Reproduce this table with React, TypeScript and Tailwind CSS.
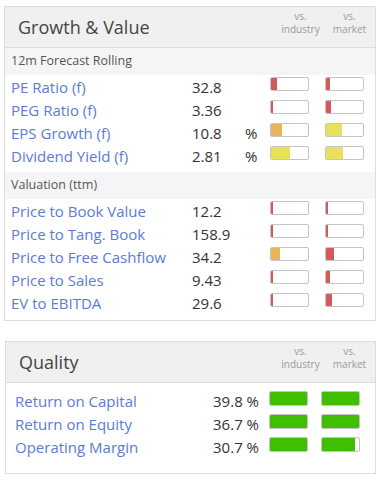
import React from 'react';

type Fill = { pct: number; color: string };

const RED = '#d45a5a';
const ORANGE = '#ebb35a';
const YELLOW = '#e9e15c';
const GREEN = '#3fbf00';

const Bar: React.FC<{ fill: Fill; tall?: boolean }> = ({ fill, tall }) => (
  <div
    className={`w-[39px] ${tall ? 'h-[15px]' : 'h-[14px]'} border border-[#c4c4c4] rounded-[2px] bg-white overflow-hidden`}
  >
    <div className="h-full" style={{ width: fill.pct, backgroundColor: fill.color }} />
  </div>
);

const PanelHeader: React.FC<{ title: string }> = ({ title }) => (
  <div className="flex items-center h-[41px] bg-[#f0f0f0] border-b border-[#dcdcdc]">
    <div className="flex-1 pl-[13px] text-[18px] text-[#444] leading-none">{title}</div>
    <div className="flex pr-px self-start pt-[3px] text-[10px] leading-[13px] text-[#9a9a9a]">
      <div className="w-[49px] text-center">
        vs.
        <br />
        industry
      </div>
      <div className="w-[49px] text-center">
        vs.
        <br />
        market
      </div>
    </div>
  </div>
);

const SubHeader: React.FC<{ text: string }> = ({ text }) => (
  <div className="h-[27px] bg-[#f5f5f5] pl-[6px] flex items-center text-[12.5px] text-[#555]">{text}</div>
);

type Row = { label: string; value: string; pct?: boolean; ind: Fill; mkt: Fill };

const forecast: Row[] = [
  { label: 'PE Ratio (f)', value: '32.8', ind: { pct: 6, color: RED }, mkt: { pct: 4, color: RED } },
  { label: 'PEG Ratio (f)', value: '3.36', ind: { pct: 2, color: RED }, mkt: { pct: 5, color: RED } },
  { label: 'EPS Growth (f)', value: '10.8', pct: true, ind: { pct: 11, color: ORANGE }, mkt: { pct: 16, color: YELLOW } },
  { label: 'Dividend Yield (f)', value: '2.81', pct: true, ind: { pct: 19, color: YELLOW }, mkt: { pct: 17, color: YELLOW } },
];

const valuation: Row[] = [
  { label: 'Price to Book Value', value: '12.2', ind: { pct: 2, color: RED }, mkt: { pct: 2, color: RED } },
  { label: 'Price to Tang. Book', value: '158.9', ind: { pct: 2, color: RED }, mkt: { pct: 2, color: RED } },
  { label: 'Price to Free Cashflow', value: '34.2', ind: { pct: 9, color: ORANGE }, mkt: { pct: 8, color: RED } },
  { label: 'Price to Sales', value: '9.43', ind: { pct: 2, color: RED }, mkt: { pct: 4, color: RED } },
  { label: 'EV to EBITDA', value: '29.6', ind: { pct: 2, color: RED }, mkt: { pct: 6, color: RED } },
];

const quality: Row[] = [
  { label: 'Return on Capital', value: '39.8 %', ind: { pct: 37, color: GREEN }, mkt: { pct: 37, color: GREEN } },
  { label: 'Return on Equity', value: '36.7 %', ind: { pct: 37, color: GREEN }, mkt: { pct: 37, color: GREEN } },
  { label: 'Operating Margin', value: '30.7 %', ind: { pct: 37, color: GREEN }, mkt: { pct: 33, color: GREEN } },
];

const GrowthRow: React.FC<{ row: Row }> = ({ row }) => (
  <div className="flex items-start h-[23px] pl-[6px] text-[15px] leading-[23px]">
    <div className="w-[181px] pt-px text-[#5b7bd4]">{row.label}</div>
    <div className="w-[53px] pt-px text-[#333]">{row.value}</div>
    <div className="w-[25px] pt-px text-[#333]">{row.pct ? '%' : ''}</div>
    <div className="flex gap-[16px] pt-[2px]">
      <Bar fill={row.ind} />
      <Bar fill={row.mkt} />
    </div>
  </div>
);

const QualityRow: React.FC<{ row: Row }> = ({ row }) => (
  <div className="flex items-start h-[23px] pl-[9px] text-[15px] leading-[23px]">
    <div className="w-[155px] pt-px text-[#5b7bd4]">{row.label}</div>
    <div className="w-[89px] pt-px text-right text-[#333]">{row.value}</div>
    <div className="flex gap-[13px] pt-[2px] ml-[10px]">
      <Bar fill={row.ind} tall />
      <Bar fill={row.mkt} tall />
    </div>
  </div>
);

export default function App() {
  return (
    <div className="bg-white min-h-screen pt-[6px] pl-[4px]" style={{ fontFamily: '"Open Sans", sans-serif' }}>
      <div className="w-[372px] border border-[#dcdcdc] pb-[6px]">
        <PanelHeader title="Growth & Value" />
        <SubHeader text="12m Forecast Rolling" />
        {forecast.map((r) => (
          <GrowthRow key={r.label} row={r} />
        ))}
        <div className="h-[5px]" />
        <SubHeader text="Valuation (ttm)" />
        {valuation.map((r) => (
          <GrowthRow key={r.label} row={r} />
        ))}
      </div>

      <div className="w-[371px] ml-px mt-[20px] border border-[#dcdcdc] pb-[15px]">
        <PanelHeader title="Quality" />
        <div className="pt-[6px]">
          {quality.map((r) => (
            <QualityRow key={r.label} row={r} />
          ))}
        </div>
      </div>
    </div>
  );
}
